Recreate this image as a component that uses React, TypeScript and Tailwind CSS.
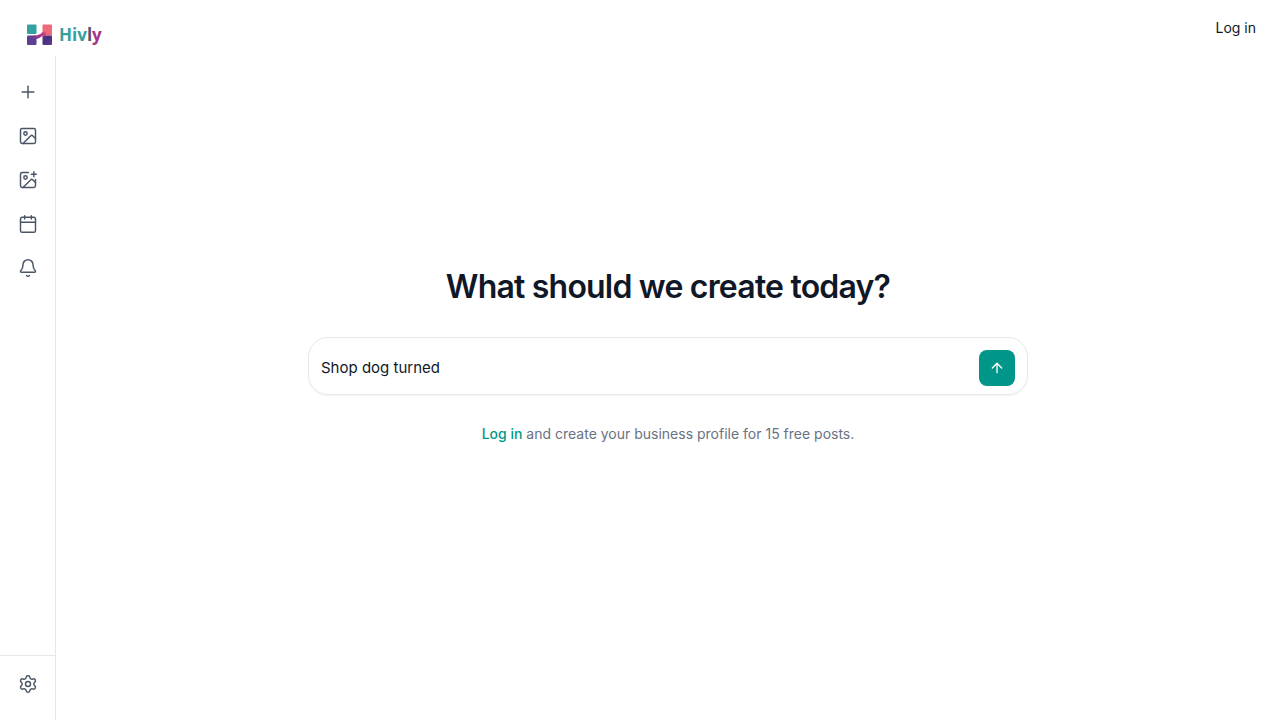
import { useState } from 'react'
import { ArrowUp, Bell, Calendar, Image, ImagePlus, Plus, Settings } from 'lucide-react'

const navItems = [
  { label: 'New', icon: Plus },
  { label: 'Gallery', icon: Image },
  { label: 'Create image', icon: ImagePlus },
  { label: 'Calendar', icon: Calendar },
  { label: 'Notifications', icon: Bell },
]

const Logo = () => {
  return (
    <a href="#" className="flex items-center gap-[6px]">
      <svg width="27" height="22" viewBox="0 0 27 22" aria-hidden="true">
        <defs>
          <linearGradient id="bridge" x1="0" y1="1" x2="1" y2="0">
            <stop offset="0" stopColor="#6b3c92" />
            <stop offset="0.4" stopColor="#a93283" />
            <stop offset="0.7" stopColor="#b83a83" />
            <stop offset="1" stopColor="#ee6a7b" />
          </linearGradient>
          <linearGradient id="corner" x1="0" y1="0" x2="1" y2="1">
            <stop offset="0" stopColor="#6d2f7c" />
            <stop offset="0.4" stopColor="#45307c" />
            <stop offset="1" stopColor="#6a3a90" />
          </linearGradient>
        </defs>
        <rect x="1" y="0.5" width="9.5" height="9.5" rx="1" fill="#35a0a2" />
        <path d="M17.5 0.5H25a1 1 0 0 1 1 1v10H16.5v-10a1 1 0 0 1 1-1z" fill="#ee6a7b" />
        <rect x="1" y="11.5" width="9.5" height="9.5" rx="1" fill="#5b3f92" />
        <rect x="16.5" y="11.5" width="9.5" height="9.5" rx="1" fill="url(#corner)" />
        <path d="M7.5 11.500h3q4 -0.500 6-3.500L20 7v4.500h-3q-3 2.500-6.500 3.500h-3z" fill="url(#bridge)" />
      </svg>
      <span className="font-['Open_Sans',sans-serif] text-[17px] leading-6 font-bold text-[#35a0a2]">
        Hiv<span className="text-[#5a5070]">l</span><span className="text-[#a8328a]">y</span>
      </span>
    </a>
  )
}

const Sidebar = () => {
  return (
    <aside className="flex w-14 shrink-0 flex-col border-r border-gray-200">
      <nav className="flex flex-1 flex-col items-center gap-1 pt-4">
        {navItems.map(({ label, icon: Icon }) => (
          <button key={label} aria-label={label} className="flex size-10 items-center justify-center rounded-lg text-gray-600">
            <Icon size={20} strokeWidth={1.75} />
          </button>
        ))}
      </nav>
      <div className="flex justify-center border-t border-gray-200 pt-2 pb-4">
        <button aria-label="Settings" className="flex size-10 items-center justify-center rounded-lg text-gray-600">
          <Settings size={20} strokeWidth={1.75} />
        </button>
      </div>
    </aside>
  )
}

const App = () => {
  const [prompt, setPrompt] = useState('Shop dog turned')

  return (
    <div className="flex min-h-screen flex-col bg-white font-['Inter',sans-serif] text-gray-900">
      <header className="flex h-14 items-center justify-between px-6">
        <div className="px-0.5 pt-3.5">
          <Logo />
        </div>
        <a href="#" className="text-sm">Log in</a>
      </header>
      <div className="flex flex-1">
        <Sidebar />
        <main className="flex flex-1 flex-col items-center justify-center px-6 pb-[62px]">
          <h1 className="text-center text-[32px] leading-9 font-semibold tracking-tight">What should we create today?</h1>
          <form
            className="mt-8 flex w-full max-w-[720px] items-center gap-2 rounded-[20px] border border-gray-200 px-3 pt-3 pb-2 shadow-xs"
            onSubmit={(e) => e.preventDefault()}
          >
            <input
              aria-label="What should we create"
              className="min-w-0 flex-1 text-[15px] leading-6 outline-none"
              value={prompt}
              onChange={(e) => setPrompt(e.target.value)}
            />
            <button aria-label="Send" className="flex size-9 items-center justify-center rounded-lg bg-teal-600 text-white">
              <ArrowUp size={16} />
            </button>
          </form>
          <p className="mt-7 text-center text-sm leading-[22px] text-gray-500">
            <a href="#" className="font-medium text-teal-600">Log in</a> and create your business profile for 15 free posts.
          </p>
        </main>
      </div>
    </div>
  )
}

export default App
